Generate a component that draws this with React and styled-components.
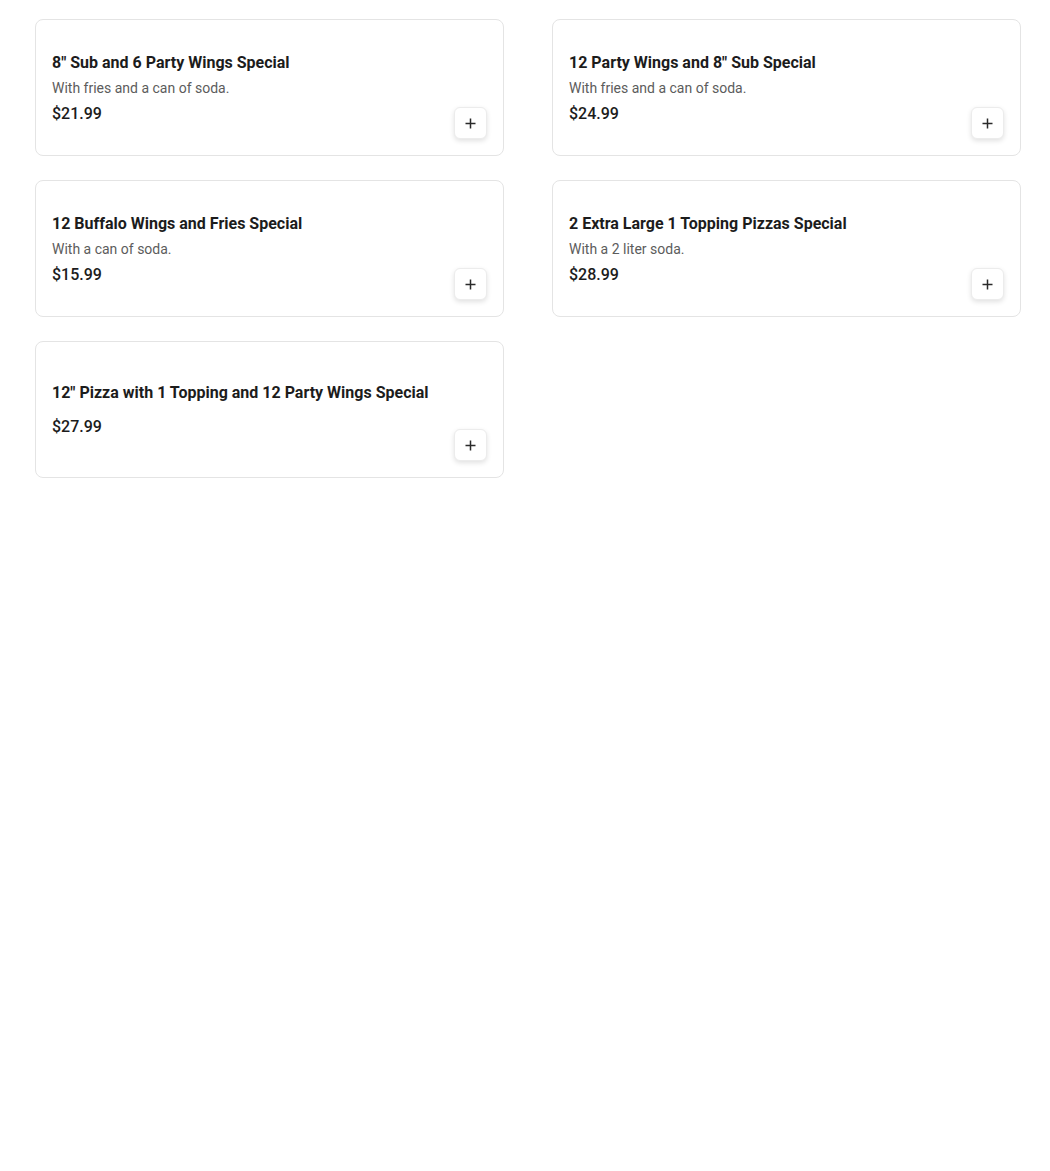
import React from 'react';
import styled, { createGlobalStyle } from 'styled-components';

const GlobalStyle = createGlobalStyle`
    html, body {
        margin: 0;
        padding: 0;
        background: #ffffff;
        font-family: Roboto, "Liberation Sans", Arial, sans-serif;
        color: #1f1f1f;
    }
    * {
        box-sizing: border-box;
    }
`;

const Grid = styled.div`
    display: grid;
    grid-template-columns: 469px 469px;
    column-gap: 48px;
    row-gap: 24px;
    padding: 19px 0 0 35px;
`;

const Card = styled.div`
    display: flex;
    align-items: stretch;
    height: 137px;
    padding: 16px;
    border: 1px solid #e4e4e4;
    border-radius: 8px;
    background: #fff;
`;

const Info = styled.div`
    flex: 1;
    display: flex;
    flex-direction: column;
    justify-content: center;
    min-width: 0;
    padding-top: ${p => (p.$noDesc ? '0' : '1px')};
`;

const Title = styled.div`
    font-size: 16px;
    line-height: 22px;
    font-weight: 700;
    color: #1c1c1c;
    margin-bottom: ${p => (p.$noDesc ? '12px' : '4px')};
`;

const Desc = styled.div`
    font-size: 14px;
    line-height: 20px;
    color: #5c5c5c;
    margin-bottom: 5px;
`;

const Price = styled.div`
    font-size: 16px;
    line-height: 22px;
    font-weight: 500;
    color: #1c1c1c;
`;

const AddButton = styled.button`
    align-self: flex-end;
    flex-shrink: 0;
    width: 33px;
    height: 32px;
    display: flex;
    align-items: center;
    justify-content: center;
    padding: 0;
    border: 1px solid #ececec;
    border-radius: 6px;
    background: #fff;
    box-shadow: 0 2px 5px rgba(0, 0, 0, 0.12);
    cursor: pointer;
`;

const PlusIcon = () => (
    <svg width="11" height="11" viewBox="0 0 11 11">
        <path d="M5.5 0.5v10M0.5 5.5h10" stroke="#2a2a2a" strokeWidth="1.5" />
    </svg>
);

const items = [
    { name: '8" Sub and 6 Party Wings Special', desc: 'With fries and a can of soda.', price: '$21.99' },
    { name: '12 Party Wings and 8" Sub Special', desc: 'With fries and a can of soda.', price: '$24.99' },
    { name: '12 Buffalo Wings and Fries Special', desc: 'With a can of soda.', price: '$15.99' },
    { name: '2 Extra Large 1 Topping Pizzas Special', desc: 'With a 2 liter soda.', price: '$28.99' },
    { name: '12" Pizza with 1 Topping and 12 Party Wings Special', desc: '', price: '$27.99' },
];

class App extends React.Component {
    render() {
        return (
            <>
                <GlobalStyle />
                <Grid>
                    {items.map(item => (
                        <Card key={item.name}>
                            <Info $noDesc={!item.desc}>
                                <Title $noDesc={!item.desc}>{item.name}</Title>
                                {item.desc && <Desc>{item.desc}</Desc>}
                                <Price>{item.price}</Price>
                            </Info>
                            <AddButton aria-label="add">
                                <PlusIcon />
                            </AddButton>
                        </Card>
                    ))}
                </Grid>
            </>
        );
    }
}

export default App;
